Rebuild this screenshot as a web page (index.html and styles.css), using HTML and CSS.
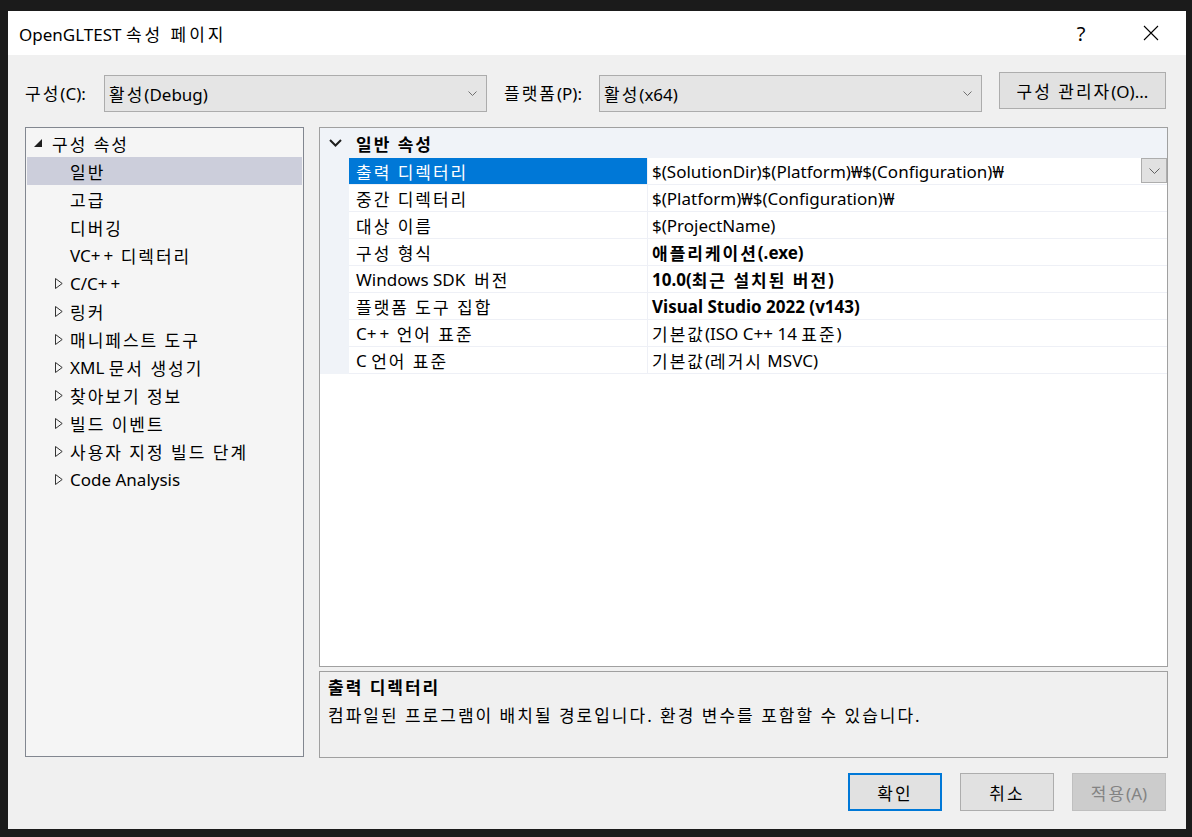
FILE: index.html
```html
<!DOCTYPE html>
<html lang="ko">

<head>
  <meta charset="UTF-8">
  <meta name="viewport" content="width=device-width, initial-scale=1.0">
  <title>OpenGLTEST 속성 페이지</title>
  <link rel="stylesheet" href="styles.css">
</head>

<body>
  <div class="window">
    <!-- Barre de titre -->
    <div class="titlebar">
      <div class="title">OpenGLTEST <span class="ko title-ko">속성 페이지</span></div>
      <div class="caption-btn help">?</div>
      <div class="caption-btn">
        <svg width="16" height="16" viewBox="0 0 16 16"><path d="M1 1L15 15M15 1L1 15" stroke="#000" stroke-width="1.1" fill="none"/></svg>
      </div>
    </div>

    <!-- Configuration / plateforme -->
    <div class="config-row">
      <span class="cfg-label"><span class="ko">구성</span>(C):</span>
      <div class="combo">
        <span><span class="ko">활성</span>(Debug)</span>
        <svg width="9" height="5" viewBox="0 0 9 5"><polyline points="0.5,0.5 4.5,4.5 8.5,0.5" fill="none" stroke="#707070"/></svg>
      </div>
      <span class="cfg-label second"><span class="ko">플랫폼</span>(P):</span>
      <div class="combo">
        <span><span class="ko">활성</span>(x64)</span>
        <svg width="9" height="5" viewBox="0 0 9 5"><polyline points="0.5,0.5 4.5,4.5 8.5,0.5" fill="none" stroke="#707070"/></svg>
      </div>
      <button class="btn mgr-btn"><span class="ko">구성 관리자</span>(O)...</button>
    </div>

    <div class="main">
      <!-- Arborescence -->
      <div class="tree">
        <div class="node root">
          <svg class="arrow" width="8" height="8" viewBox="0 0 8 8"><polygon points="8,0 8,8 0,8" fill="#1e1e1e"/></svg>
          <span class="ko">구성 속성</span>
        </div>
        <div class="node leaf selected"><span class="ko">일반</span></div>
        <div class="node leaf"><span class="ko">고급</span></div>
        <div class="node leaf"><span class="ko">디버깅</span></div>
        <div class="node leaf">VC<span class="pp">++</span>&nbsp;<span class="ko">디렉터리</span></div>
        <div class="node collapsed"><svg class="arrow" width="8" height="11" viewBox="0 0 8 11"><polygon points="0.5,0.5 7.2,5.5 0.5,10.5" fill="none" stroke="#333"/></svg>C/C<span class="pp">++</span></div>
        <div class="node collapsed"><svg class="arrow" width="8" height="11" viewBox="0 0 8 11"><polygon points="0.5,0.5 7.2,5.5 0.5,10.5" fill="none" stroke="#333"/></svg><span class="ko">링커</span></div>
        <div class="node collapsed"><svg class="arrow" width="8" height="11" viewBox="0 0 8 11"><polygon points="0.5,0.5 7.2,5.5 0.5,10.5" fill="none" stroke="#333"/></svg><span class="ko">매니페스트 도구</span></div>
        <div class="node collapsed"><svg class="arrow" width="8" height="11" viewBox="0 0 8 11"><polygon points="0.5,0.5 7.2,5.5 0.5,10.5" fill="none" stroke="#333"/></svg>XML <span class="ko">문서 생성기</span></div>
        <div class="node collapsed"><svg class="arrow" width="8" height="11" viewBox="0 0 8 11"><polygon points="0.5,0.5 7.2,5.5 0.5,10.5" fill="none" stroke="#333"/></svg><span class="ko">찾아보기 정보</span></div>
        <div class="node collapsed"><svg class="arrow" width="8" height="11" viewBox="0 0 8 11"><polygon points="0.5,0.5 7.2,5.5 0.5,10.5" fill="none" stroke="#333"/></svg><span class="ko">빌드 이벤트</span></div>
        <div class="node collapsed"><svg class="arrow" width="8" height="11" viewBox="0 0 8 11"><polygon points="0.5,0.5 7.2,5.5 0.5,10.5" fill="none" stroke="#333"/></svg><span class="ko">사용자 지정 빌드 단계</span></div>
        <div class="node collapsed"><svg class="arrow" width="8" height="11" viewBox="0 0 8 11"><polygon points="0.5,0.5 7.2,5.5 0.5,10.5" fill="none" stroke="#333"/></svg>Code Analysis</div>
      </div>

      <div class="right">
        <!-- Grille des propriétés -->
        <div class="grid">
          <div class="category">
            <svg class="cat-arrow" width="13" height="8" viewBox="0 0 13 8"><polyline points="1,1 6.5,6.5 12,1" fill="none" stroke="#1e1e1e" stroke-width="2"/></svg>
            <span class="ko">일반 속성</span>
          </div>
          <div class="prop-row selected">
            <div class="gutter"></div>
            <div class="name"><span class="ko">출력 디렉터리</span></div>
            <div class="value">
              <span class="value-text">$(SolutionDir)$(Platform)₩$(Configuration)₩</span>
              <span class="drop-btn"><svg width="11" height="6" viewBox="0 0 11 6"><polyline points="0.5,0.5 5.5,5.5 10.5,0.5" fill="none" stroke="#606060"/></svg></span>
            </div>
          </div>
          <div class="prop-row">
            <div class="gutter"></div>
            <div class="name"><span class="ko">중간 디렉터리</span></div>
            <div class="value">$(Platform)₩$(Configuration)₩</div>
          </div>
          <div class="prop-row">
            <div class="gutter"></div>
            <div class="name"><span class="ko">대상 이름</span></div>
            <div class="value">$(ProjectName)</div>
          </div>
          <div class="prop-row">
            <div class="gutter"></div>
            <div class="name"><span class="ko">구성 형식</span></div>
            <div class="value bold"><span class="ko">애플리케이션</span>(.exe)</div>
          </div>
          <div class="prop-row">
            <div class="gutter"></div>
            <div class="name">Windows SDK&nbsp; <span class="ko">버전</span></div>
            <div class="value bold">10.0(<span class="ko">최근 설치된 버전</span>)</div>
          </div>
          <div class="prop-row">
            <div class="gutter"></div>
            <div class="name"><span class="ko">플랫폼 도구 집합</span></div>
            <div class="value bold">Visual Studio 2022 (v143)</div>
          </div>
          <div class="prop-row">
            <div class="gutter"></div>
            <div class="name">C<span class="pp">++</span>&nbsp;<span class="ko">언어 표준</span></div>
            <div class="value"><span class="ko">기본값</span>(ISO C++ 14&nbsp;<span class="ko">표준</span>)</div>
          </div>
          <div class="prop-row">
            <div class="gutter"></div>
            <div class="name">C&nbsp;<span class="ko">언어 표준</span></div>
            <div class="value"><span class="ko">기본값</span>(<span class="ko">레거시</span>&nbsp;MSVC)</div>
          </div>
        </div>

        <!-- Description -->
        <div class="desc">
          <div class="desc-title ko">출력 디렉터리</div>
          <div class="ko">컴파일된 프로그램이 배치될 경로입니다. 환경 변수를 포함할 수 있습니다.</div>
        </div>
      </div>
    </div>

    <div class="footer">
      <button class="btn dlg-btn ok"><span class="ko">확인</span></button>
      <button class="btn dlg-btn"><span class="ko">취소</span></button>
      <button class="btn dlg-btn apply"><span class="ko">적용</span>(A)</button>
    </div>
  </div>
</body>

</html>
```

FILE: styles.css
```css
/* Styles généraux */
body {
  margin: 0;
  background-color: #1b1b1b;
  font-family: 'Noto Sans', 'Noto Sans CJK KR', sans-serif;
  font-size: 17px;
  color: #000;
}

/* Le hangul est plus large dans la police d'origine */
.ko {
  letter-spacing: 2px;
}

.title-ko {
  letter-spacing: 3px;
}

/* "++" plus espacé */
.pp {
  letter-spacing: 3px;
}

.window {
  margin: 11px 0 0 8px;
  width: 1178px;
  height: 818px;
  background-color: #f0f0f0;
  display: flex;
  flex-direction: column;
}

/* Barre de titre */
.titlebar {
  height: 44px;
  background-color: #fff;
  display: flex;
  align-items: center;
}

.title {
  flex: 1;
  padding-left: 11px;
}

.caption-btn {
  width: 70px;
  height: 44px;
  display: flex;
  align-items: center;
  justify-content: center;
}

.help {
  font-size: 20px;
}

/* Ligne de configuration */
.config-row {
  display: flex;
  align-items: flex-start;
  height: 38px;
  margin: 17px 0 17px 17px;
}

.cfg-label {
  width: 79px;
  line-height: 37px;
  margin-top: 3px;
}

.cfg-label.second {
  width: 95px;
  margin-left: 17px;
}

.combo {
  width: 383px;
  height: 37px;
  margin-top: 3px;
  box-sizing: border-box;
  border: 1px solid #acacac;
  background-color: #e5e5e5;
  display: flex;
  align-items: center;
  justify-content: space-between;
  padding: 0 9px 0 4px;
}

.btn {
  font: inherit;
  color: #000;
  background-color: #e1e1e1;
  border: 1px solid #adadad;
  box-sizing: border-box;
  padding: 0;
}

.mgr-btn {
  margin-left: 17px;
  width: 167px;
  height: 37px;
}

/* Zone principale */
.main {
  display: flex;
  gap: 15px;
  margin-left: 17px;
  height: 631px;
}

.tree {
  width: 279px;
  height: 630px;
  box-sizing: border-box;
  background-color: #f5f5f5;
  border: 1px solid #828790;
  padding: 1px;
}

.node {
  height: 28px;
  display: flex;
  align-items: center;
  white-space: pre;
}

.node.root {
  padding-left: 7px;
}

.node.root .arrow {
  margin-right: 10px;
}

.node.leaf {
  padding-left: 43px;
}

.node.collapsed {
  padding-left: 28px;
}

.node.collapsed .arrow {
  margin-right: 7px;
}

.node.selected {
  background-color: #cccedb;
}

.right {
  width: 849px;
  display: flex;
  flex-direction: column;
  gap: 4px;
}

/* Grille des propriétés */
.grid {
  height: 540px;
  box-sizing: border-box;
  background-color: #fff;
  border: 1px solid #a0a0a0;
}

.category {
  height: 30px;
  background-color: #f0f3f8;
  display: flex;
  align-items: center;
  font-weight: bold;
  padding-left: 9px;
}

.cat-arrow {
  margin-right: 14px;
}

.prop-row {
  display: flex;
  height: 27px;
}

.gutter {
  width: 29px;
  background-color: #f0f3f8;
}

.name,
.value {
  box-sizing: border-box;
  height: 27px;
  border-bottom: 1px solid #eef0f6;
  display: flex;
  align-items: center;
  white-space: pre;
}

.name {
  width: 298px;
  padding-left: 7px;
}

.value {
  flex: 1;
  border-left: 1px solid #eef0f6;
  padding-left: 4px;
}

.value.bold {
  font-weight: bold;
}

.value-text {
  flex: 1;
}

.prop-row.selected .name {
  background-color: #0078d7;
  color: #fff;
}

.drop-btn {
  width: 26px;
  height: 25px;
  box-sizing: border-box;
  align-self: flex-start;
  border: 1px solid #adadad;
  background-color: #e1e1e1;
  display: flex;
  align-items: center;
  justify-content: center;
}

/* Description */
.desc {
  height: 87px;
  box-sizing: border-box;
  border: 1px solid #a0a0a0;
  padding: 2px 8px;
  line-height: 28px;
}

.desc-title {
  font-weight: bold;
}

/* Boutons du bas */
.footer {
  display: flex;
  justify-content: flex-end;
  gap: 18px;
  margin-top: 15px;
  padding-right: 20px;
}

.dlg-btn {
  width: 94px;
  height: 38px;
}

.dlg-btn.ok {
  border: 2px solid #0078d7;
}

.dlg-btn.apply {
  background-color: #cccccc;
  border-color: #bfbfbf;
  color: #838383;
}
```
